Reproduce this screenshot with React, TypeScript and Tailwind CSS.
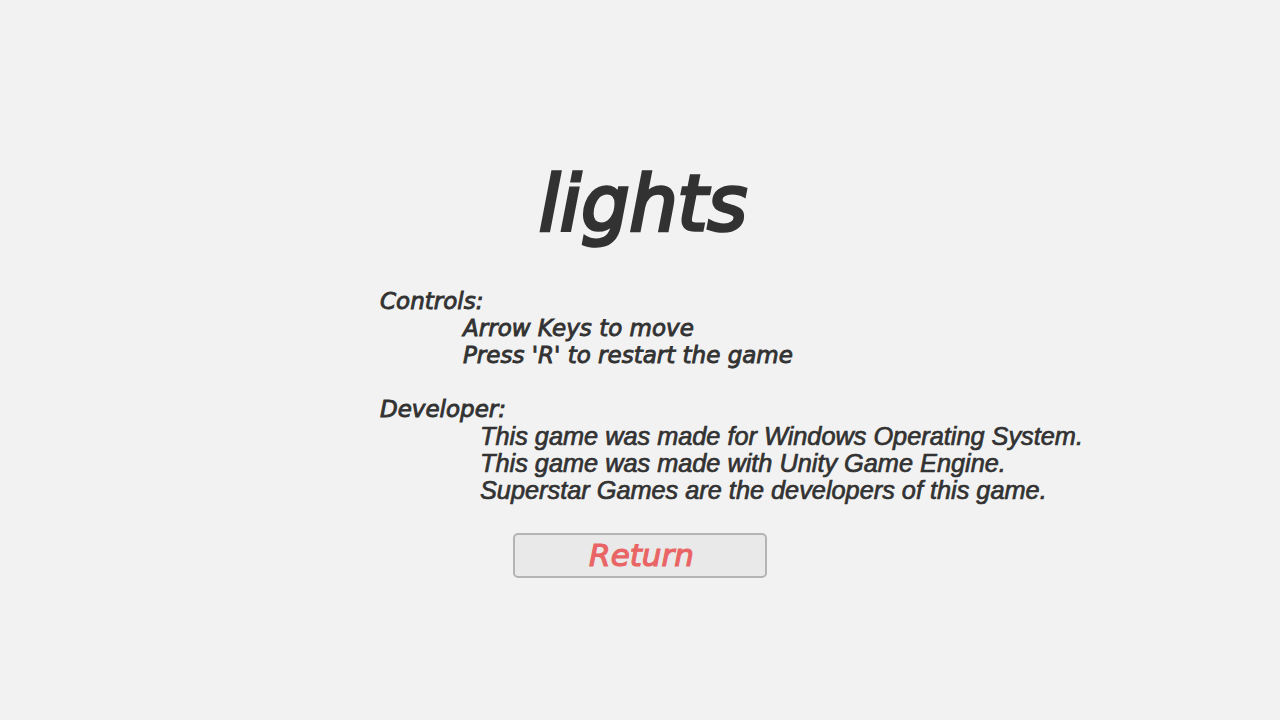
export default function App() {
  return (
    <div className="w-[1280px] h-[720px] bg-[#f2f2f2] text-[#323232] overflow-hidden flex flex-col">
      <h1
        className="mt-[166px] pl-[6px] text-center text-[76px] leading-[76px] italic font-normal font-['DejaVu_Sans',sans-serif] [-webkit-text-stroke:3.6px_#323232]"
      >
        lights
      </h1>

      <div className="mt-[46px] pl-[380px] flex flex-col">
        <div className="font-['DejaVu_Sans',sans-serif] italic text-[23px] leading-[27px] [-webkit-text-stroke:0.9px_#323232]">
          <p>Controls:</p>
          <p className="pl-[83px]">Arrow Keys to move</p>
          <p className="pl-[83px]">Press 'R' to restart the game</p>
          <p className="h-[27px]"></p>
          <p>Developer:</p>
        </div>
        <div className="pl-[100px] font-['Liberation_Sans',Arial,sans-serif] italic text-[25.3px] leading-[27px] [-webkit-text-stroke:0.7px_#323232]">
          <p>This game was made for Windows Operating System.</p>
          <p>This game was made with Unity Game Engine.</p>
          <p>Superstar Games are the developers of this game.</p>
        </div>
      </div>

      <div className="mt-[29px] flex justify-center">
        <button className="w-[254px] h-[45px] ml-[-1px] rounded-[5px] border-2 border-[#b4b4b4] bg-[#e9e9e9] flex items-center justify-center pl-[4px] font-['DejaVu_Sans',sans-serif] italic text-[31px] text-[#e96565] [-webkit-text-stroke:1.2px_#e96565]">
          Return
        </button>
      </div>
    </div>
  );
}
